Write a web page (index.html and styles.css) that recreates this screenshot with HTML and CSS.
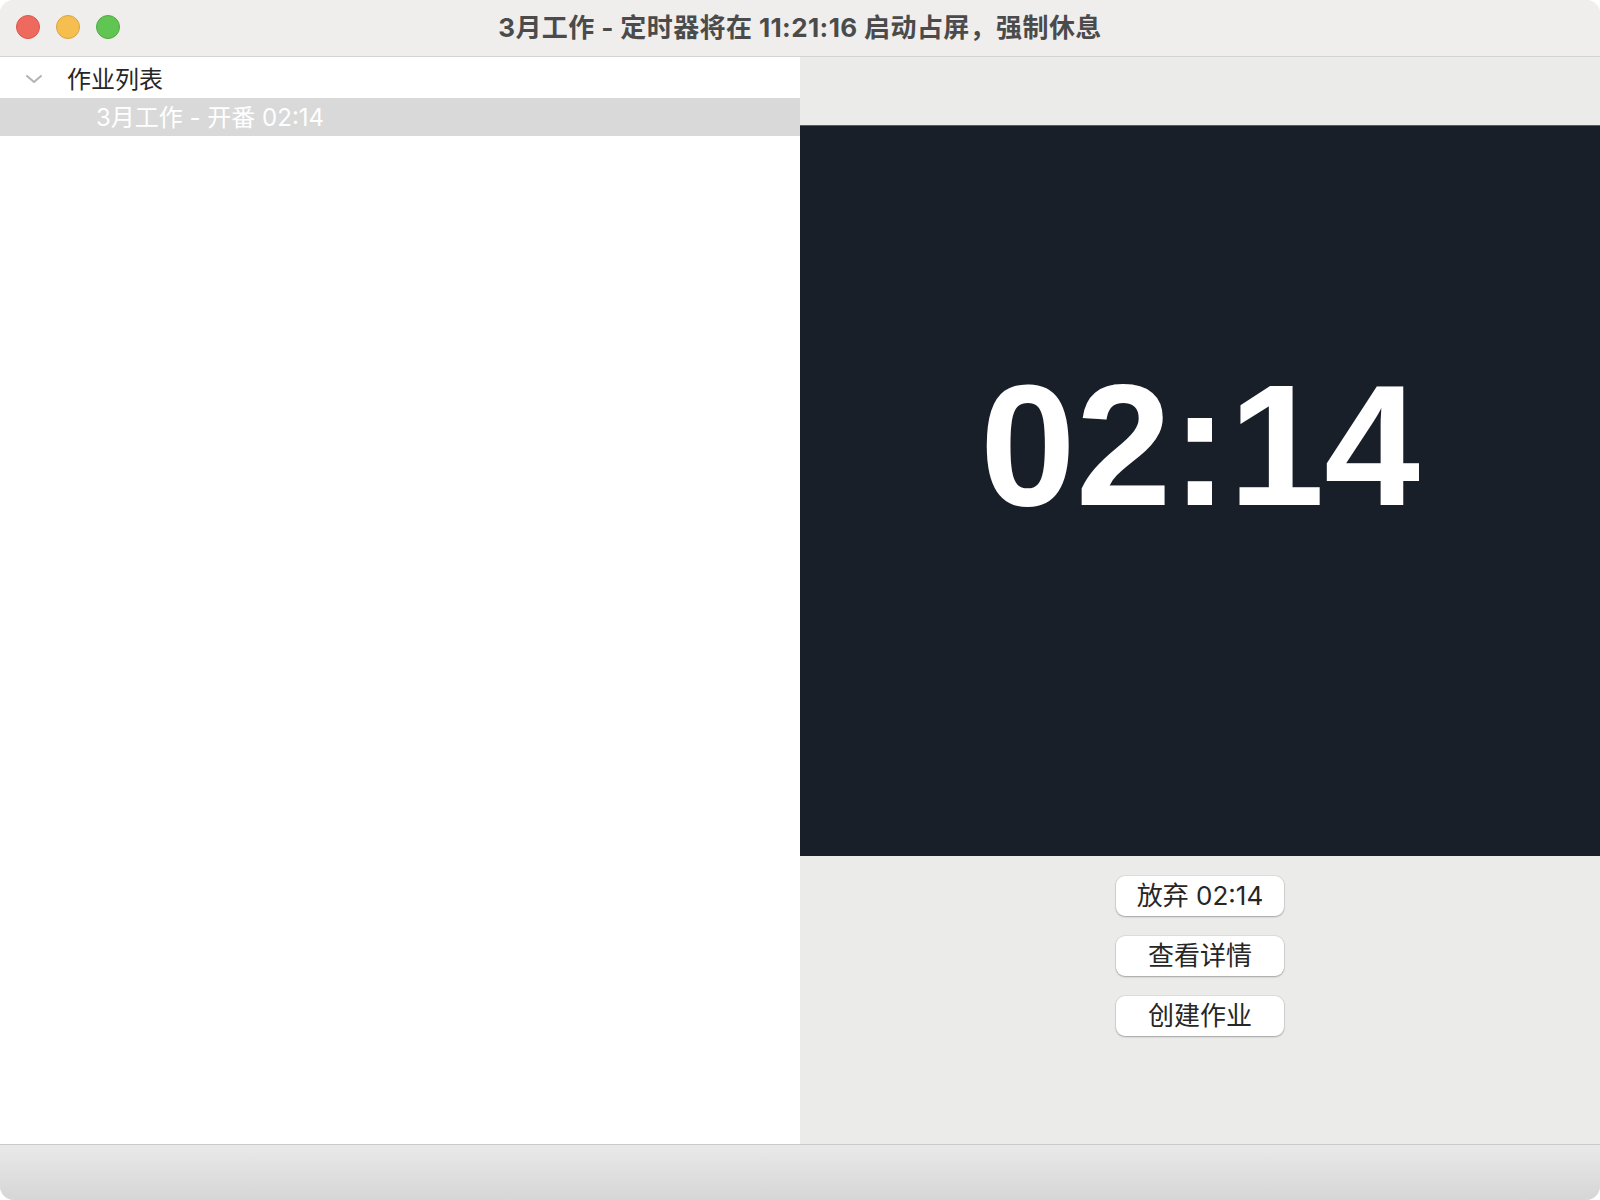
FILE: index.html
```html
<!DOCTYPE html>
<html lang="zh-CN">
<head>
<meta charset="utf-8">
<title>3月工作</title>
<link rel="stylesheet" href="styles.css">
</head>
<body>
<div class="window">
  <header class="titlebar">
    <div class="lights">
      <span class="light red"></span>
      <span class="light yellow"></span>
      <span class="light green"></span>
    </div>
    <div class="title">3月工作 - 定时器将在 11:21:16 启动占屏，强制休息</div>
  </header>
  <main class="main">
    <aside class="sidebar">
      <div class="group-row">
        <svg class="chevron" width="18" height="10" viewBox="0 0 18 10"><path d="M2 2 L9 8 L16 2" fill="none" stroke="#b3b3b3" stroke-width="2" stroke-linecap="round" stroke-linejoin="round"/></svg>
        <span class="group-label">作业列表</span>
      </div>
      <div class="item-row selected">3月工作 - 开番 02:14</div>
    </aside>
    <section class="panel">
      <div class="timer-box">
        <div class="timer">02:14</div>
      </div>
      <div class="buttons">
        <button class="btn">放弃 02:14</button>
        <button class="btn">查看详情</button>
        <button class="btn">创建作业</button>
      </div>
    </section>
  </main>
  <footer class="bottombar"></footer>
</div>
</body>
</html>
```

FILE: styles.css
```css
* { box-sizing: border-box; }
html, body {
  margin: 0;
  padding: 0;
  background: #ffffff;
}
body {
  width: 1600px;
  height: 1200px;
  font-family: Inter, "Noto Sans CJK SC", sans-serif;
}
.window {
  width: 1600px;
  height: 1200px;
  border-radius: 14px;
  overflow: hidden;
  display: flex;
  flex-direction: column;
  background: #ebebea;
}
.titlebar {
  position: relative;
  height: 57px;
  flex: 0 0 57px;
  background: #efeeed;
  border-bottom: 1px solid #d4d4d4;
  display: flex;
  align-items: center;
  justify-content: center;
}
.lights {
  position: absolute;
  left: 16px;
  top: 15px;
  display: flex;
  gap: 16px;
}
.light {
  width: 24px;
  height: 24px;
  border-radius: 50%;
  display: block;
}
.red { background: #ee6a5f; border: 1px solid #d8574b; }
.yellow { background: #f5be4f; border: 1px solid #d9a441; }
.green { background: #61c554; border: 1px solid #52a942; }
.title {
  font-size: 26px;
  font-weight: 700;
  color: #4b4b4b;
  letter-spacing: 0.4px;
  margin-top: -6px;
}
.main {
  flex: 1 1 auto;
  display: flex;
  min-height: 0;
}
.sidebar {
  width: 800px;
  flex: 0 0 800px;
  background: #ffffff;
}
.group-row {
  height: 41px;
  display: flex;
  align-items: center;
  padding-left: 25px;
}
.chevron {
  display: block;
  margin-right: 24px;
  margin-top: 2px;
}
.group-label {
  font-size: 24px;
  color: #262626;
}
.item-row {
  height: 38px;
  display: flex;
  align-items: center;
  padding-left: 96px;
  padding-bottom: 3px;
  font-size: 24px;
}
.item-row.selected {
  background: #d9d9d9;
  color: #ffffff;
}
.panel {
  flex: 1 1 auto;
  background: #ebebea;
  padding-top: 68px;
  display: flex;
  flex-direction: column;
  align-items: center;
}
.timer-box {
  width: 100%;
  height: 731px;
  background: #181f29;
  border-top: 1px solid #575c63;
  padding-top: 233px;
  display: flex;
  justify-content: center;
}
.timer {
  font-family: "Liberation Sans", Arial, sans-serif;
  font-weight: 700;
  font-size: 172px;
  line-height: 1;
  color: #ffffff;
  height: 172px;
}
.buttons {
  margin-top: 20px;
  display: flex;
  flex-direction: column;
  gap: 20px;
  align-items: center;
}
.btn {
  width: 168px;
  height: 40px;
  border: none;
  border-radius: 9px;
  background: #ffffff;
  box-shadow: 0 1px 2px rgba(0,0,0,0.28), 0 0 0 1px rgba(0,0,0,0.05);
  font-family: Inter, "Noto Sans CJK SC", sans-serif;
  font-size: 26px;
  color: #262626;
  padding: 0;
  display: flex;
  align-items: center;
  justify-content: center;
  line-height: 1;
}
.bottombar {
  height: 56px;
  flex: 0 0 56px;
  border-top: 1px solid #c9c9c9;
  background: linear-gradient(#e9e9e9, #d6d6d6);
}
```
